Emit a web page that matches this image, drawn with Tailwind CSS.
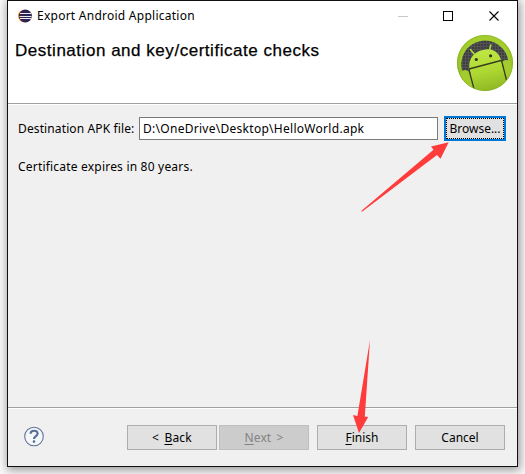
<!DOCTYPE html>
<html lang="en">
<head>
<meta charset="utf-8">
<title>Export Android Application</title>
<script src="https://cdn.jsdelivr.net/npm/@tailwindcss/browser@4"></script>
</head>
<body class="w-[525px] h-[474px] overflow-hidden bg-[#f9f9f9] relative pl-[7px] text-[12px] leading-[16px] text-black font-['Noto_Sans',sans-serif]">
<main class="w-[511px] h-[467px] border border-[#101014] bg-[#f0f0f0] flex flex-col shadow-[1px_2px_9px_1px_rgba(0,0,0,0.4)]">
  <header class="h-[102px] shrink-0 bg-white flex flex-col">
    <div class="h-[30px] flex items-center">
      <svg class="ml-[10px] mt-[-1px] w-[14px] h-[14px]" viewBox="0 0 14 14"><circle cx="6.3" cy="7" r="6.3" fill="#f7941e"/><circle cx="7.4" cy="7" r="6.5" fill="#2c2255"/><path d="M2 4.5h11M1.5 7.5h12M2 9.5h11" stroke="#fff" stroke-width=".9"/></svg>
      <span class="ml-[5px] w-[170px] tracking-[0.25px] whitespace-nowrap">Export Android Application</span>
      <svg class="ml-auto mr-[17px] w-[103px] h-[12px]" viewBox="0 0 103 12" fill="none"><path d="M1 6.5h10" stroke="#c9c9c9"/><rect x="46.5" y="1.5" width="9" height="9" stroke="#000"/><path d="M92.5 1.5l9 9m0-9l-9 9" stroke="#000" stroke-width="1.1"/></svg>
    </div>
    <div class="flex justify-between pl-[7px] pr-[3px]">
      <h1 class="mt-[10px] font-['Liberation_Sans',sans-serif] text-[17px] leading-[20px] tracking-[0.53px] whitespace-nowrap [-webkit-text-stroke:0.25px_#000]">Destination and key/certificate checks</h1>
      <svg class="mt-[3px] w-[58px] h-[58px]" viewBox="0 0 58 58">
        <defs>
          <radialGradient id="rim" cx=".5" cy=".45" r=".58"><stop offset="0" stop-color="#b5dc35"/><stop offset=".75" stop-color="#a2cc2b"/><stop offset="1" stop-color="#7ba51a"/></radialGradient>
          <linearGradient id="robot" x1=".4" y1="0" x2=".6" y2="1"><stop offset="0" stop-color="#bfe844"/><stop offset=".5" stop-color="#add632"/><stop offset="1" stop-color="#87b21f"/></linearGradient>
          <pattern id="mesh" width="3" height="3" patternUnits="userSpaceOnUse"><rect width="3" height="3" fill="#3e3e40"/><path d="M0 .5h3M.5 0v3" stroke="#555558" stroke-width=".8"/></pattern>
          <clipPath id="disc"><circle cx="29" cy="29" r="27.5"/></clipPath>
        </defs>
        <circle cx="29" cy="29" r="28" fill="url(#rim)"/>
        <path d="M6.5 38A23.7 23.7 0 1 1 52.5 28L48 36L12 40z" fill="url(#mesh)"/>
        <g clip-path="url(#disc)">
          <path d="M13.5 35C12 26 17 18 27 16C36 13.5 43 18 45 26L52 50L46 60L19 60z" fill="url(#robot)"/>
          <path d="M4 39Q7 35 11 36.5L13 37.5L19 58L8 52zM46 28Q49 24.5 54 27L58 44L52 48z" fill="#a2cb2c"/>
          <path d="M13 35L45 26.5M13 36L18 55M45.5 26.5L50.5 46" stroke="#353c20" stroke-width="1.3"/>
          <path d="M18 20L14.5 15.5M33.5 16L34.8 11" stroke="#b3dc3a" stroke-width="1.5" stroke-linecap="round"/>
          <circle cx="20.3" cy="25.5" r="1.6" fill="#34361f"/><circle cx="34.6" cy="21.8" r="1.6" fill="#34361f"/>
        </g>
        <circle cx="29" cy="29" r="27.6" fill="none" stroke="#8bb525" stroke-width=".7"/>
      </svg>
    </div>
  </header>
  <section class="h-[305px] shrink-0 border-t border-t-[#a0a0a0] border-b border-b-[#a0a0a0] flex flex-col">
    <div class="h-px w-full bg-white shrink-0"></div>
    <div class="mt-[11px] pl-[10px] flex items-center">
      <label for="dest" class="w-[121px] tracking-[0.12px] whitespace-nowrap">Destination APK file:</label>
      <div id="dest" class="w-[299px] h-[23px] border border-[#7a7a7a] bg-white pl-[3px] leading-[21px] tracking-[0.28px] whitespace-nowrap">D:\OneDrive\Desktop\HelloWorld.apk</div>
      <button class="ml-[6px] w-[62px] h-[25px] border-2 border-[#0078d7] bg-[#e1e1e1] flex"><span class="flex-1 h-[21px] border border-dotted border-black leading-[19px] whitespace-nowrap">Browse...</span></button>
    </div>
    <p class="mt-[18px] pl-[10px] tracking-[0.2px]">Certificate expires in 80 years.</p>
  </section>
  <footer class="flex-1 border-t border-white flex items-start pl-[16px]">
    <svg class="mt-[17px] w-[20px] h-[21px]" viewBox="0 0 20 21" fill="none"><circle cx="10" cy="10.5" r="9.3" fill="#f5f6f8" stroke="#5f7699" stroke-width="1.1"/><path d="M6.6 7.8C6.6 3.8 13.6 3.8 13.6 7.6C13.6 10 10 10.1 10 13" stroke="#566f98" stroke-width="2.2"/><circle cx="10" cy="15.6" r="1.3" fill="#566f98"/></svg>
    <div class="ml-[83px] mt-[16px] flex">
      <button class="w-[90px] h-[25px] border border-[#adadad] bg-[#e1e1e1] tracking-[0.2px] [word-spacing:2px]">&lt; <u class="underline-offset-2">B</u>ack</button>
      <button class="ml-[2px] w-[90px] h-[25px] border border-[#bfbfbf] bg-[#cccccc] text-[#838383] tracking-[0.1px] [word-spacing:2px]"><u class="underline-offset-2">N</u>ext &gt;</button>
      <button class="ml-[8px] w-[90px] h-[25px] border border-[#adadad] bg-[#e1e1e1]"><u class="underline-offset-2">F</u>inish</button>
      <button class="ml-[8px] w-[90px] h-[25px] border border-[#adadad] bg-[#e1e1e1]">Cancel</button>
    </div>
  </footer>
</main>
<svg class="absolute inset-0 w-[525px] h-[474px] pointer-events-none" viewBox="0 0 525 474" fill="#ff3b3b"><path d="M448.7 142.2L431 146.5L433.5 149.8L361.2 211L362 211.8L437 155L440.5 158.7z"/><path d="M359 433L353 415L357.4 416L370 340L364.8 416.6L368.2 417z"/></svg>
</body>
</html>
